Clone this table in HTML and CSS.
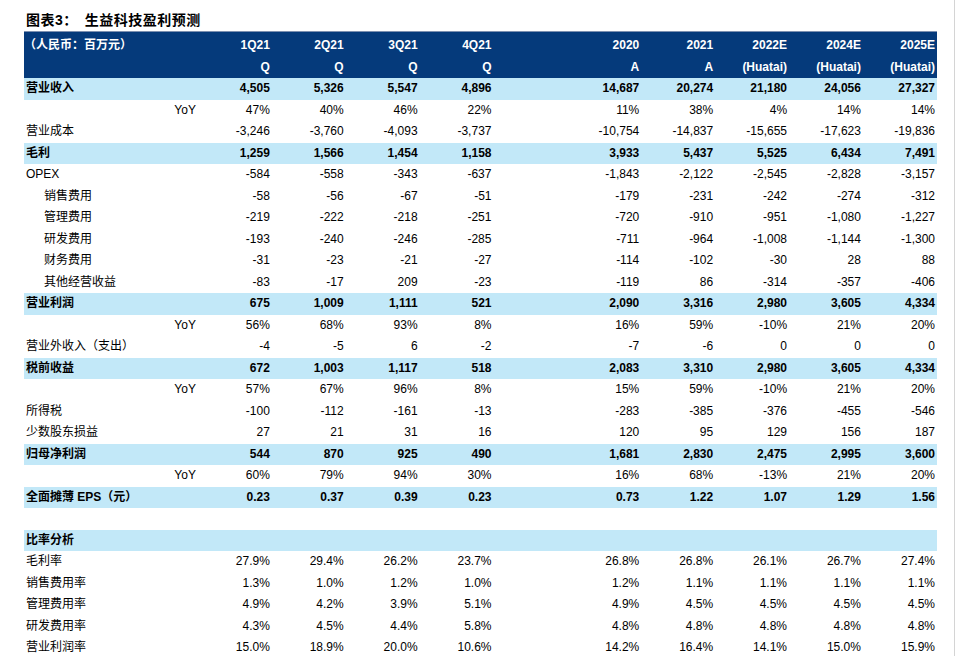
FILE: index.html
```html
<!DOCTYPE html>
<html lang="zh">
<head>
<meta charset="utf-8">
<link rel="stylesheet" href="styles.css">
</head>
<body>
<div class="page">
  <div class="title">图表3：<span class="title-main">生益科技盈利预测</span></div>
  <table class="fin">
    <colgroup>
      <col class="c-label"><col class="c-num"><col class="c-num"><col class="c-num"><col class="c-num"><col class="c-num"><col class="c-num"><col class="c-num"><col class="c-num"><col class="c-num"><col class="c-num"><col class="c-num">
    </colgroup>
    <thead>
      <tr class="h1"><th class="lbl" colspan="2">（人民币：百万元）</th><th>1Q21</th><th>2Q21</th><th>3Q21</th><th>4Q21</th><th></th><th>2020</th><th>2021</th><th>2022E</th><th>2024E</th><th>2025E</th></tr>
      <tr class="h2"><th></th><th></th><th>Q</th><th>Q</th><th>Q</th><th>Q</th><th></th><th>A</th><th>A</th><th>(Huatai)</th><th>(Huatai)</th><th>(Huatai)</th></tr>
    </thead>
    <tbody>
      <tr class="hl"><td class="lbl">营业收入</td><td></td><td>4,505</td><td>5,326</td><td>5,547</td><td>4,896</td><td></td><td>14,687</td><td>20,274</td><td>21,180</td><td>24,056</td><td>27,327</td></tr>
      <tr><td class="lbl"></td><td>YoY</td><td>47%</td><td>40%</td><td>46%</td><td>22%</td><td></td><td>11%</td><td>38%</td><td>4%</td><td>14%</td><td>14%</td></tr>
      <tr><td class="lbl">营业成本</td><td></td><td>-3,246</td><td>-3,760</td><td>-4,093</td><td>-3,737</td><td></td><td>-10,754</td><td>-14,837</td><td>-15,655</td><td>-17,623</td><td>-19,836</td></tr>
      <tr class="hl"><td class="lbl">毛利</td><td></td><td>1,259</td><td>1,566</td><td>1,454</td><td>1,158</td><td></td><td>3,933</td><td>5,437</td><td>5,525</td><td>6,434</td><td>7,491</td></tr>
      <tr><td class="lbl">OPEX</td><td></td><td>-584</td><td>-558</td><td>-343</td><td>-637</td><td></td><td>-1,843</td><td>-2,122</td><td>-2,545</td><td>-2,828</td><td>-3,157</td></tr>
      <tr><td class="lbl ind">销售费用</td><td></td><td>-58</td><td>-56</td><td>-67</td><td>-51</td><td></td><td>-179</td><td>-231</td><td>-242</td><td>-274</td><td>-312</td></tr>
      <tr><td class="lbl ind">管理费用</td><td></td><td>-219</td><td>-222</td><td>-218</td><td>-251</td><td></td><td>-720</td><td>-910</td><td>-951</td><td>-1,080</td><td>-1,227</td></tr>
      <tr><td class="lbl ind">研发费用</td><td></td><td>-193</td><td>-240</td><td>-246</td><td>-285</td><td></td><td>-711</td><td>-964</td><td>-1,008</td><td>-1,144</td><td>-1,300</td></tr>
      <tr><td class="lbl ind">财务费用</td><td></td><td>-31</td><td>-23</td><td>-21</td><td>-27</td><td></td><td>-114</td><td>-102</td><td>-30</td><td>28</td><td>88</td></tr>
      <tr><td class="lbl ind">其他经营收益</td><td></td><td>-83</td><td>-17</td><td>209</td><td>-23</td><td></td><td>-119</td><td>86</td><td>-314</td><td>-357</td><td>-406</td></tr>
      <tr class="hl"><td class="lbl">营业利润</td><td></td><td>675</td><td>1,009</td><td>1,111</td><td>521</td><td></td><td>2,090</td><td>3,316</td><td>2,980</td><td>3,605</td><td>4,334</td></tr>
      <tr><td class="lbl"></td><td>YoY</td><td>56%</td><td>68%</td><td>93%</td><td>8%</td><td></td><td>16%</td><td>59%</td><td>-10%</td><td>21%</td><td>20%</td></tr>
      <tr><td class="lbl" colspan="2">营业外收入（支出）</td><td>-4</td><td>-5</td><td>6</td><td>-2</td><td></td><td>-7</td><td>-6</td><td>0</td><td>0</td><td>0</td></tr>
      <tr class="hl"><td class="lbl">税前收益</td><td></td><td>672</td><td>1,003</td><td>1,117</td><td>518</td><td></td><td>2,083</td><td>3,310</td><td>2,980</td><td>3,605</td><td>4,334</td></tr>
      <tr><td class="lbl"></td><td>YoY</td><td>57%</td><td>67%</td><td>96%</td><td>8%</td><td></td><td>15%</td><td>59%</td><td>-10%</td><td>21%</td><td>20%</td></tr>
      <tr><td class="lbl">所得税</td><td></td><td>-100</td><td>-112</td><td>-161</td><td>-13</td><td></td><td>-283</td><td>-385</td><td>-376</td><td>-455</td><td>-546</td></tr>
      <tr><td class="lbl">少数股东损益</td><td></td><td>27</td><td>21</td><td>31</td><td>16</td><td></td><td>120</td><td>95</td><td>129</td><td>156</td><td>187</td></tr>
      <tr class="hl"><td class="lbl">归母净利润</td><td></td><td>544</td><td>870</td><td>925</td><td>490</td><td></td><td>1,681</td><td>2,830</td><td>2,475</td><td>2,995</td><td>3,600</td></tr>
      <tr><td class="lbl"></td><td>YoY</td><td>60%</td><td>79%</td><td>94%</td><td>30%</td><td></td><td>16%</td><td>68%</td><td>-13%</td><td>21%</td><td>20%</td></tr>
      <tr class="hl"><td class="lbl" colspan="2">全面摊薄 EPS（元）</td><td>0.23</td><td>0.37</td><td>0.39</td><td>0.23</td><td></td><td>0.73</td><td>1.22</td><td>1.07</td><td>1.29</td><td>1.56</td></tr>
      <tr><td class="lbl"></td><td></td><td></td><td></td><td></td><td></td><td></td><td></td><td></td><td></td><td></td><td></td></tr>
      <tr class="hl"><td class="lbl">比率分析</td><td></td><td></td><td></td><td></td><td></td><td></td><td></td><td></td><td></td><td></td><td></td></tr>
      <tr><td class="lbl">毛利率</td><td></td><td>27.9%</td><td>29.4%</td><td>26.2%</td><td>23.7%</td><td></td><td>26.8%</td><td>26.8%</td><td>26.1%</td><td>26.7%</td><td>27.4%</td></tr>
      <tr><td class="lbl">销售费用率</td><td></td><td>1.3%</td><td>1.0%</td><td>1.2%</td><td>1.0%</td><td></td><td>1.2%</td><td>1.1%</td><td>1.1%</td><td>1.1%</td><td>1.1%</td></tr>
      <tr><td class="lbl">管理费用率</td><td></td><td>4.9%</td><td>4.2%</td><td>3.9%</td><td>5.1%</td><td></td><td>4.9%</td><td>4.5%</td><td>4.5%</td><td>4.5%</td><td>4.5%</td></tr>
      <tr><td class="lbl">研发费用率</td><td></td><td>4.3%</td><td>4.5%</td><td>4.4%</td><td>5.8%</td><td></td><td>4.8%</td><td>4.8%</td><td>4.8%</td><td>4.8%</td><td>4.8%</td></tr>
      <tr><td class="lbl">营业利润率</td><td></td><td>15.0%</td><td>18.9%</td><td>20.0%</td><td>10.6%</td><td></td><td>14.2%</td><td>16.4%</td><td>14.1%</td><td>15.0%</td><td>15.9%</td></tr>
    </tbody>
  </table>
</div>
</body>
</html>
```

FILE: styles.css
```css
html, body {
  margin: 0;
  padding: 0;
  background: #ffffff;
}

body {
  font-family: "Liberation Sans", "Noto Sans CJK SC", sans-serif;
  color: #000000;
  font-size: 12px;
}

.page {
  width: 930px;
  height: 656px;
  padding-left: 24px;
  border-right: 1px solid #d4d4d4;
  overflow: hidden;
}

.title {
  padding-top: 11px;
  padding-left: 2px;
  height: 20px;
  line-height: 18px;
  font-size: 14px;
  font-weight: bold;
  letter-spacing: 0.5px;
  white-space: nowrap;
}

.title-main {
  margin-left: 7px;
}

.fin {
  table-layout: fixed;
  border-collapse: collapse;
  width: 913px;
}

.c-label {
  width: 100px;
}

.c-num {
  width: 73.9px;
}

.fin th,
.fin td {
  padding: 0 2px 0 0;
  text-align: right;
  white-space: nowrap;
  overflow: visible;
  height: 21.5px;
  line-height: 21.5px;
  vertical-align: middle;
}

.fin thead tr {
  background: #053a7b;
  color: #ffffff;
}

.fin thead th {
  font-weight: bold;
}

.fin .h1 th {
  border-top: 1px solid #7d90b0;
  height: 23.5px;
  line-height: 21.5px;
  padding-top: 1px;
  vertical-align: bottom;
}

.fin .lbl {
  text-align: left;
  padding-left: 2px;
}

.fin thead .lbl {
  padding-left: 0;
}

.fin .ind {
  padding-left: 20px;
}

.fin tr.hl {
  background: #c2e8f8;
}

.fin tr.hl td {
  font-weight: bold;
}
```
